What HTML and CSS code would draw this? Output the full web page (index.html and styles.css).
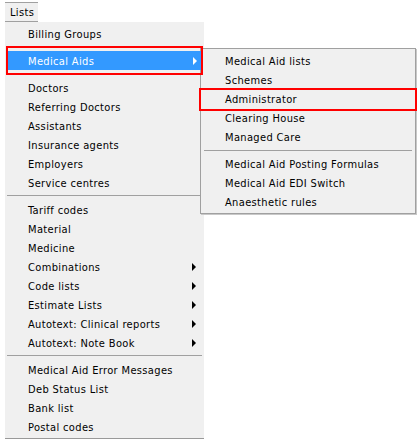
FILE: index.html
```html
<!DOCTYPE html>
<html>
<head>
<meta charset="utf-8">
<link rel="stylesheet" href="styles.css">
</head>
<body>
<div class="menubar"><div class="menubar-item">Lists</div></div>
<div class="menu main">
  <div class="item">Billing Groups</div>
  <div class="callout-row">
    <div class="item active">Medical Aids<span class="arrow white"></span></div>
  </div>
  <div class="item">Doctors</div>
  <div class="item">Referring Doctors</div>
  <div class="item">Assistants</div>
  <div class="item">Insurance agents</div>
  <div class="item">Employers</div>
  <div class="item">Service centres</div>
  <div class="sep"></div>
  <div class="item">Tariff codes</div>
  <div class="item">Material</div>
  <div class="item">Medicine</div>
  <div class="item">Combinations<span class="arrow"></span></div>
  <div class="item">Code lists<span class="arrow"></span></div>
  <div class="item">Estimate Lists<span class="arrow"></span></div>
  <div class="item">Autotext: Clinical reports<span class="arrow"></span></div>
  <div class="item">Autotext: Note Book<span class="arrow"></span></div>
  <div class="sep"></div>
  <div class="item">Medical Aid Error Messages</div>
  <div class="item">Deb Status List</div>
  <div class="item">Bank list</div>
  <div class="item">Postal codes</div>
</div>
<div class="menu sub">
  <div class="item">Medical Aid lists</div>
  <div class="item">Schemes</div>
  <div class="item">Administrator</div>
  <div class="item">Clearing House</div>
  <div class="item">Managed Care</div>
  <div class="sep"></div>
  <div class="item">Medical Aid Posting Formulas</div>
  <div class="item">Medical Aid EDI Switch</div>
  <div class="item">Anaesthetic rules</div>
</div>
<div class="callout"></div>
</body>
</html>
```
FILE: styles.css
```css
html, body {
  margin: 0;
  padding: 0;
  background: #ffffff;
}
body {
  position: relative;
  width: 417px;
  height: 439px;
  overflow: hidden;
  font-family: "DejaVu Sans Condensed", "DejaVu Sans", sans-serif;
  font-stretch: condensed;
  font-size: 11px;
  letter-spacing: 0.35px;
  color: #000;
}
.menubar {
  padding: 2px 0 0 5px;
  height: 20px;
}
.menubar-item {
  box-sizing: border-box;
  width: 33px;
  height: 20px;
  line-height: 19px;
  padding-left: 5px;
  background: #f0f0f0;
  border-top: 1px solid #a0a0a0;
  border-bottom: 1px solid #a0a0a0;
}
.menu {
  background: #f0f0f0;
}
.main {
  margin-left: 5px;
  width: 199px;
  padding: 2px 0;
  border-bottom: 1px solid #999999;
}
.item {
  position: relative;
  height: 19px;
  line-height: 21px;
  padding-left: 23px;
  white-space: nowrap;
}
.callout-row {
  position: relative;
  z-index: 3;
  box-sizing: border-box;
  height: 29px;
  margin: 3px 1px;
  padding: 3px 0;
  border: 2px solid #ff0000;
}
.item.active {
  background: #3399ff;
  color: #ffffff;
  padding-left: 20px;
}
.arrow {
  position: absolute;
  left: 187px;
  top: 6px;
  width: 0;
  height: 0;
  border-left: 4px solid #000;
  border-top: 4px solid transparent;
  border-bottom: 4px solid transparent;
}
.arrow.white {
  left: 185px;
  border-left-color: #ffffff;
}
.sep {
  margin: 3px 2px 4px;
  border-top: 1px solid #a0a0a0;
}
.sub {
  position: absolute;
  z-index: 2;
  left: 200px;
  top: 48px;
  box-sizing: border-box;
  width: 216px;
  padding: 2px 0;
  border: 1px solid #a0a0a0;
  box-shadow: 1px 1px 0 #c8c8c8;
}
.sub .item {
  padding-left: 24px;
}
.sub .sep {
  margin: 4px 3px 3px;
}
.callout {
  position: absolute;
  z-index: 4;
  left: 199px;
  top: 88px;
  width: 214px;
  height: 19px;
  border: 2px solid #ff0000;
}
```
